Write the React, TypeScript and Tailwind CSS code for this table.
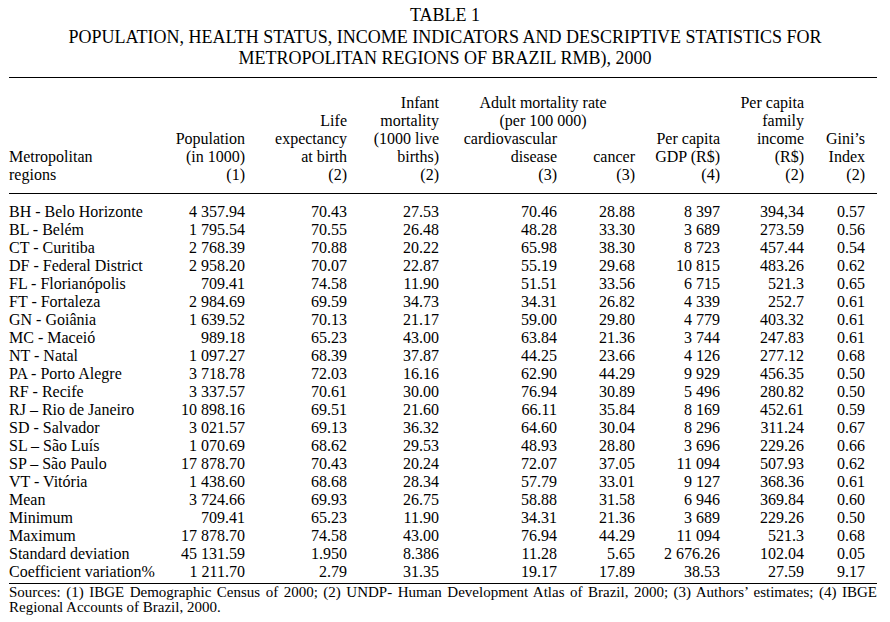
import React from 'react';

const cols = 'grid grid-cols-[152px_84px_102px_92px_118px_78px_85px_84px_61px]';

const rows: string[][] = [
  ['BH - Belo Horizonte', '4 357.94', '70.43', '27.53', '70.46', '28.88', '8 397', '394,34', '0.57'],
  ['BL - Belém', '1 795.54', '70.55', '26.48', '48.28', '33.30', '3 689', '273.59', '0.56'],
  ['CT - Curitiba', '2 768.39', '70.88', '20.22', '65.98', '38.30', '8 723', '457.44', '0.54'],
  ['DF - Federal District', '2 958.20', '70.07', '22.87', '55.19', '29.68', '10 815', '483.26', '0.62'],
  ['FL - Florianópolis', '709.41', '74.58', '11.90', '51.51', '33.56', '6 715', '521.3', '0.65'],
  ['FT - Fortaleza', '2 984.69', '69.59', '34.73', '34.31', '26.82', '4 339', '252.7', '0.61'],
  ['GN - Goiânia', '1 639.52', '70.13', '21.17', '59.00', '29.80', '4 779', '403.32', '0.61'],
  ['MC - Maceió', '989.18', '65.23', '43.00', '63.84', '21.36', '3 744', '247.83', '0.61'],
  ['NT - Natal', '1 097.27', '68.39', '37.87', '44.25', '23.66', '4 126', '277.12', '0.68'],
  ['PA - Porto Alegre', '3 718.78', '72.03', '16.16', '62.90', '44.29', '9 929', '456.35', '0.50'],
  ['RF - Recife', '3 337.57', '70.61', '30.00', '76.94', '30.89', '5 496', '280.82', '0.50'],
  ['RJ – Rio de Janeiro', '10 898.16', '69.51', '21.60', '66.11', '35.84', '8 169', '452.61', '0.59'],
  ['SD - Salvador', '3 021.57', '69.13', '36.32', '64.60', '30.04', '8 296', '311.24', '0.67'],
  ['SL – São Luís', '1 070.69', '68.62', '29.53', '48.93', '28.80', '3 696', '229.26', '0.66'],
  ['SP – São Paulo', '17 878.70', '70.43', '20.24', '72.07', '37.05', '11 094', '507.93', '0.62'],
  ['VT - Vitória', '1 438.60', '68.68', '28.34', '57.79', '33.01', '9 127', '368.36', '0.61'],
  ['Mean', '3 724.66', '69.93', '26.75', '58.88', '31.58', '6 946', '369.84', '0.60'],
  ['Minimum', '709.41', '65.23', '11.90', '34.31', '21.36', '3 689', '229.26', '0.50'],
  ['Maximum', '17 878.70', '74.58', '43.00', '76.94', '44.29', '11 094', '521.3', '0.68'],
  ['Standard deviation', '45 131.59', '1.950', '8.386', '11.28', '5.65', '2 676.26', '102.04', '0.05'],
  ['Coefficient variation%', '1 211.70', '2.79', '31.35', '19.17', '17.89', '38.53', '27.59', '9.17'],
];

function Head({ lines }: { lines: string[] }) {
  return (
    <div className="text-right whitespace-nowrap">
      {lines.map((l, i) => (
        <div key={i}>{l}</div>
      ))}
    </div>
  );
}

export default function App() {
  return (
    <div className="w-[890px] h-[622px] bg-white text-black font-['Liberation_Serif',serif] pt-[5px]">
      {/* Title */}
      <div className="text-center text-[18px] leading-[21.5px]">
        <div>TABLE 1</div>
        <div>POPULATION, HEALTH STATUS, INCOME INDICATORS AND DESCRIPTIVE STATISTICS FOR</div>
        <div>METROPOLITAN REGIONS OF BRAZIL RMB), 2000</div>
      </div>

      <div className="ml-[9px] w-[868px] mt-[7px] text-[16px] leading-[18px]">
        <div className="border-t border-black" />

        {/* Column headings */}
        <div className={`${cols} items-end pt-[16px] pb-[9px]`}>
          <div className="text-left whitespace-nowrap">
            <div>Metropolitan</div>
            <div>regions</div>
          </div>
          <Head lines={['Population', '(in 1000)', '(1)']} />
          <Head lines={['Life', 'expectancy', 'at birth', '(2)']} />
          <Head lines={['Infant', 'mortality', '(1000 live', 'births)', '(2)']} />
          <div className="col-span-2">
            <div className="text-center whitespace-nowrap pl-[12px]">
              <div>Adult mortality rate</div>
              <div>(per 100 000)</div>
            </div>
            <div className="grid grid-cols-[118px_78px] items-end">
              <Head lines={['cardiovascular', 'disease', '(3)']} />
              <Head lines={['cancer', '(3)']} />
            </div>
          </div>
          <Head lines={['Per capita', 'GDP (R$)', '(4)']} />
          <Head lines={['Per capita', 'family', 'income', '(R$)', '(2)']} />
          <Head lines={['Gini’s', 'Index', '(2)']} />
        </div>

        <div className="border-t border-black" />

        {/* Body */}
        <div className="pt-[9px] pb-[2px]">
          {rows.map((r) => (
            <div key={r[0]} className={cols}>
              {r.map((c, i) => (
                <div key={i} className={i === 0 ? 'whitespace-nowrap' : 'text-right whitespace-nowrap'}>
                  {c}
                </div>
              ))}
            </div>
          ))}
        </div>

        <div className="border-t border-black" />

        <p className="text-[15px] leading-[15.7px] text-justify pt-[1px]">
          Sources: (1) IBGE Demographic Census of 2000; (2) UNDP- Human Development Atlas of Brazil, 2000; (3) Authors’ estimates; (4) IBGE Regional Accounts of Brazil, 2000.
        </p>
      </div>
    </div>
  );
}
